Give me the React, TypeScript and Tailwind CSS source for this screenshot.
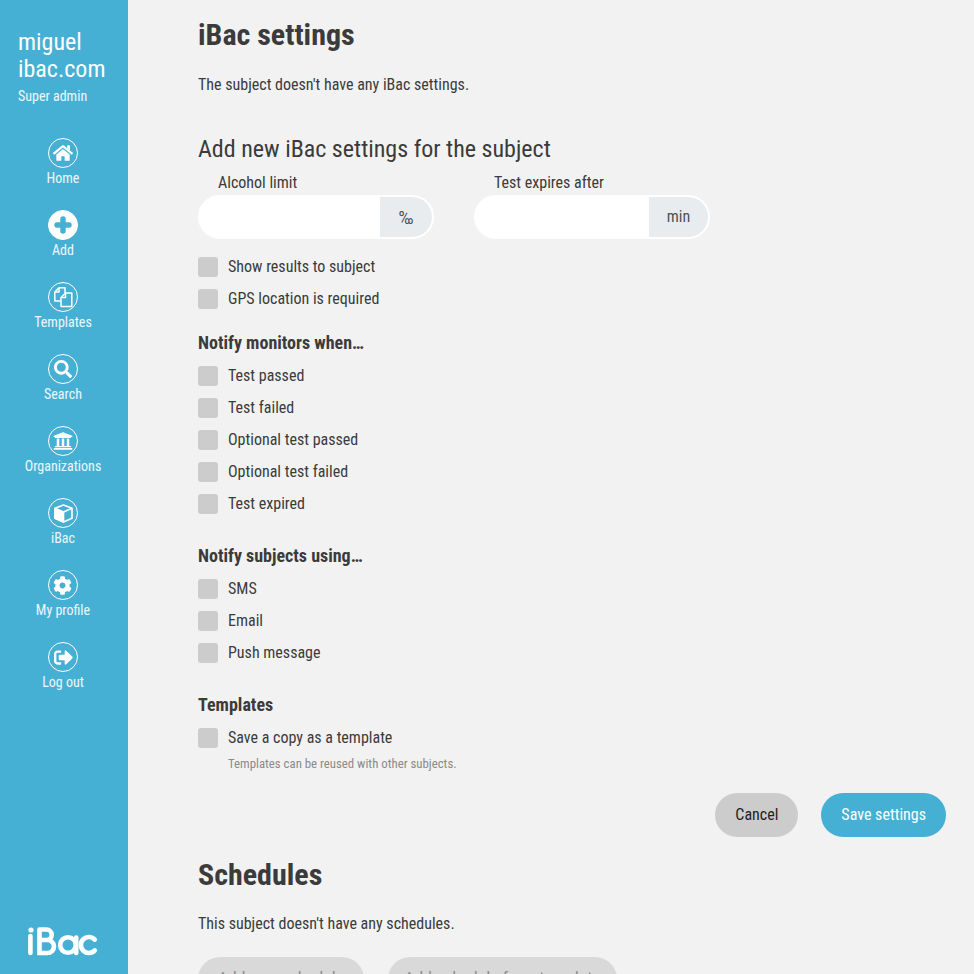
import React from 'react';
import { FaHome, FaSearch, FaUniversity, FaCog, FaSignOutAlt } from 'react-icons/fa';

const PlusIcon = () => (
  <svg width="18" height="18" viewBox="0 0 18 18" fill="none" stroke="currentColor" strokeWidth="5.4" strokeLinecap="round">
    <path d="M9 3v12M3 9h12" />
  </svg>
);

const FilesIcon = () => (
  <svg width="20" height="22" viewBox="0 0 20 22" fill="none" stroke="currentColor" strokeWidth="1.5" strokeLinejoin="round">
    <path d="M7.5 15H1.8V6L6 1.8h6V7" />
    <path d="M6 1.8V6H1.8" />
    <path d="M18.8 20.5H8V11.5L12.5 7h6.3z" />
    <path d="M12.5 7v4.5H8" />
  </svg>
);

const CubeIcon = () => (
  <svg width="19" height="19" viewBox="0 0 19 19" fill="none" stroke="currentColor" strokeWidth="1.6" strokeLinejoin="round">
    <path d="M9.5 1L18 4.3v10L9.5 18 1 14.3v-10z" />
    <path d="M1 4.3l8.5 3.6v10L1 14.3z" fill="currentColor" />
    <path d="M18 4.3L9.5 7.9" />
  </svg>
);

const navItems = [
  { label: 'Home', icon: <FaHome size={20} /> },
  { label: 'Add', icon: <PlusIcon />, active: true },
  { label: 'Templates', icon: <FilesIcon /> },
  { label: 'Search', icon: <FaSearch size={18} /> },
  { label: 'Organizations', icon: <FaUniversity size={20} /> },
  { label: 'iBac', icon: <CubeIcon /> },
  { label: 'My profile', icon: <FaCog size={19} /> },
  { label: 'Log out', icon: <FaSignOutAlt size={19} /> },
];

const Logo = () => (
  <svg width="72" height="32" viewBox="0 0 72 32" fill="none" stroke="white" strokeWidth="4.6" strokeLinecap="round" className="block">
    <circle cx="4" cy="5" r="2.6" fill="white" stroke="none" />
    <path d="M3.4 11v17" />
    <path d="M12.5 4.5V28h8a6.5 6.5 0 0 0 0-13h-8M12.5 4.5h7a5.2 5.2 0 0 1 0 10.5" />
    <circle cx="41" cy="20" r="7.8" />
    <path d="M49.2 12.5V28" />
    <path d="M67.8 14.6a8 8 0 1 0 0 10.8" />
  </svg>
);

const Check = ({ label }: { label: string }) => (
  <label className="flex items-center gap-[10px] h-5 mb-3">
    <span className="w-5 h-5 rounded-[3px] bg-[#cccccc]" />
    <span>{label}</span>
  </label>
);

const Affix = ({ label, unit, unitClass, width }: { label: string; unit: string; unitClass: string; width: string }) => (
  <div className={width}>
    <div className="pl-5 h-[25px] leading-[26px]">{label}</div>
    <div className="flex h-11 rounded-full border-2 border-white bg-white overflow-hidden">
      <div className="flex-1" />
      <div className={`${unitClass} bg-[#e9ecef] flex items-center justify-center text-[#495057]`}>{unit}</div>
    </div>
  </div>
);

export default function App() {
  return (
    <div className="flex h-[974px] w-[974px] overflow-hidden bg-[#f2f2f2] text-[#3b3b3b] text-[16px] [font-family:Roboto,sans-serif] [font-stretch:75%]">
      <aside className="w-32 shrink-0 bg-[#46b0d4] text-white flex flex-col">
        <div className="pl-[18px] pt-[29px]">
          <div className="text-[24px] leading-[27px]">miguel<br />ibac.com</div>
          <div className="text-[14px] leading-5 mt-[3px] text-white/90">Super admin</div>
        </div>
        <nav className="mt-[32px] pr-[2px] flex flex-col items-center">
          {navItems.map(item => (
            <div key={item.label} className="h-[72px] flex flex-col items-center">
              <div className={`w-[30px] h-[30px] rounded-full border border-white flex items-center justify-center ${item.active ? 'bg-white text-[#46b0d4]' : 'text-white'}`}>
                {item.icon}
              </div>
              <div className="text-[14px] leading-5 text-white/90">{item.label}</div>
            </div>
          ))}
        </nav>
        <div className="mt-auto pl-[27px] pb-[17px]"><Logo /></div>
      </aside>
      <main className="flex-1 pl-[70px] pr-7">
        <h1 className="text-[30px] font-bold leading-9 mt-[17px]">iBac settings</h1>
        <p className="mt-[20px] leading-6">The subject doesn't have any iBac settings.</p>
        <h2 className="text-[24px] leading-8 mt-[36px]">Add new iBac settings for the subject</h2>
        <div className="flex gap-10 mt-[5px]">
          <Affix label="Alcohol limit" unit="‰" unitClass="w-[52px] text-[18px]" width="w-[236px]" />
          <Affix label="Test expires after" unit="min" unitClass="w-[59px]" width="w-[236px]" />
        </div>
        <div className="mt-[18px]">
          <Check label="Show results to subject" />
          <Check label="GPS location is required" />
        </div>
        <h3 className="font-bold text-[18px] leading-6 mt-[22px] mb-[11px]">Notify monitors when…</h3>
        {['Test passed', 'Test failed', 'Optional test passed', 'Optional test failed', 'Test expired'].map(t => <Check key={t} label={t} />)}
        <h3 className="font-bold text-[18px] leading-6 mt-[30px] mb-[11px]">Notify subjects using…</h3>
        {['SMS', 'Email', 'Push message'].map(t => <Check key={t} label={t} />)}
        <h3 className="font-bold text-[18px] leading-6 mt-[30px] mb-[11px]">Templates</h3>
        <Check label="Save a copy as a template" />
        <p className="pl-[30px] -mt-[4px] text-[12.8px] leading-4 text-[#8a8a8a]">Templates can be reused with other subjects.</p>
        <div className="flex justify-end gap-[23px] mt-[21px]">
          <button className="h-11 px-5 rounded-full bg-[#cccccc] text-[#222]">Cancel</button>
          <button className="h-11 px-5 rounded-full bg-[#46b0d4] text-white">Save settings</button>
        </div>
        <h1 className="text-[30px] font-bold leading-9 mt-[20px]">Schedules</h1>
        <p className="mt-[19px] leading-6">This subject doesn't have any schedules.</p>
        <div className="flex gap-6 mt-[21px]">
          <button className="h-11 w-[166px] rounded-full bg-[#d9d9d9] text-[#8f8f8f] text-[17.6px]">Add new schedule</button>
          <button className="h-11 w-[229px] rounded-full bg-[#d9d9d9] text-[#8f8f8f] text-[17.6px]">Add schedule from template</button>
        </div>
      </main>
    </div>
  );
}
